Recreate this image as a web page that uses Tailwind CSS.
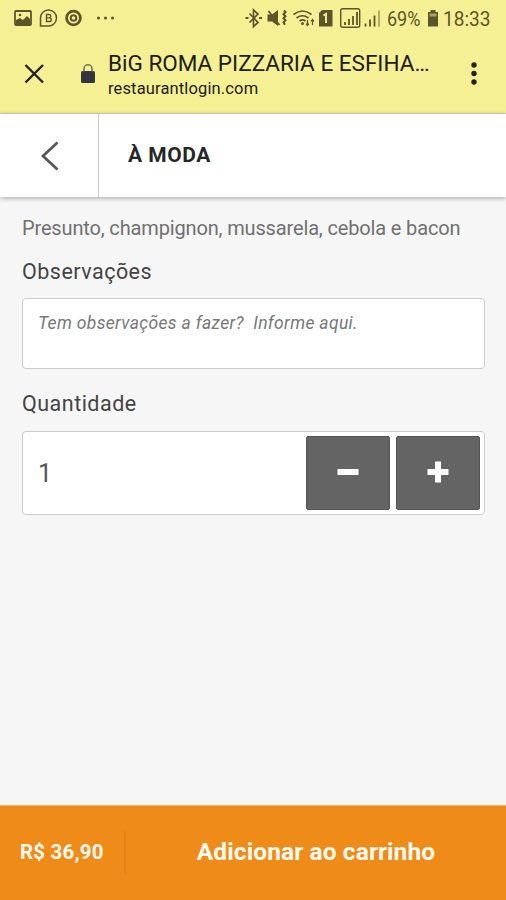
<!DOCTYPE html>
<html lang="pt-BR">
<head>
<meta charset="utf-8">
<meta name="viewport" content="width=device-width, initial-scale=1">
<title>BiG ROMA PIZZARIA E ESFIHARIA</title>
<script src="https://cdn.jsdelivr.net/npm/@tailwindcss/browser@4"></script>
</head>
<body class="flex h-[900px] w-[506px] flex-col overflow-hidden bg-[#f6f6f6] font-['Roboto',sans-serif] whitespace-nowrap">
  <div class="flex h-9 shrink-0 items-center bg-[#f6f094] pl-[14px] text-[#5c552c]">
    <svg class="h-9 w-[104px] shrink-0" viewBox="14 0 104 36" fill="none" stroke="currentColor">
      <rect x="15" y="11" width="16" height="14" rx="1" stroke-width="1.800"/>
      <path d="M16 24v-4l4-2 3 2 4-4 3 3v5z" fill="currentColor" stroke="none"/>
      <circle cx="20" cy="15" r="1.300" fill="currentColor" stroke="none"/>
      <path d="M40.500 26v-8a8 8 0 1 1 8 8z" stroke-width="1.500"/>
      <path d="M46.500 14.500h2.600a1.600 1.600 0 0 1 0 3.400h-2.600zm0 3.400h3a1.700 1.700 0 0 1 0 3.600h-3z" stroke-width="1.400"/>
      <circle cx="73.500" cy="18" r="6.900" stroke-width="2.800"/>
      <circle cx="73.500" cy="18" r="2.800" stroke-width="2"/>
      <g fill="currentColor" stroke="none"><circle cx="98.500" cy="18" r="1.500"/><circle cx="105.500" cy="18" r="1.500"/><circle cx="112.500" cy="18" r="1.500"/></g>
    </svg>
    <svg class="ml-[127px] h-9 w-[139px] shrink-0" viewBox="245 0 139 36" fill="none" stroke="currentColor">
      <path d="M249.500 13.500l8.500 9-4.500 4V10l4.500 4-8.500 8.500" stroke-width="1.700"/>
      <path d="M245.500 18h3M259 18h3" stroke-width="1.800"/>
      <path d="M267.500 14.500h4.500l6-4.500v16l-6-4.500h-4.500z" fill="currentColor" stroke="none"/>
      <path d="M268.500 11l11 14" stroke-width="1.800"/>
      <path d="M284 10.500l1.500 1.800-2 2 2 2-2 2 2 2-2 2 1.500 2.500" stroke-width="2"/>
      <path d="M293.500 14.500q9-7 18 0M296.500 18q6-4.500 12 0M299.500 21q3-2.300 6 0" stroke-width="1.600"/>
      <circle cx="302.500" cy="23.500" r="1.500" fill="currentColor" stroke="none"/>
      <path d="M307.500 20v5.500m-1.500-1.800l1.500 1.800 1.500-1.800M312.500 25v-5.500m-1.500 1.800l1.500-1.800 1.500 1.800" stroke-width="1.200"/>
      <path d="M322 10h10.500v16.500H319V13z" fill="currentColor" stroke="none"/>
      <path d="M323.500 15.500l2.500-1.500v9" stroke="#f6f094" stroke-width="1.900"/>
      <rect x="340.700" y="8.700" width="19" height="18.600" rx="2" stroke-width="1.400"/>
      <path d="M345 25v-3M349 25v-6M353 25v-9M357 25V12" stroke-width="1.800"/>
      <path d="M365.500 26.500v-3M370 26.500v-7M374.500 26.500v-11" stroke-width="1.800"/>
      <path d="M379 26.500v-16" stroke-width="1.800" opacity=".5"/>
    </svg>
    <span class="ml-[3px] w-[34px] pt-[2px]"><span class="inline-block origin-left scale-x-90 text-[20px]">69%</span></span>
    <svg class="ml-[6px] h-9 w-[12px] shrink-0" viewBox="427 0 12 36" fill="currentColor">
      <path d="M428 12h2.500v-2h5v2h2.500v14.500h-10z"/><path d="M429.500 13.500h7v3h-7z" fill="#a9a25a"/>
    </svg>
    <span class="ml-[4px] pt-[2px]"><span class="inline-block origin-left scale-x-93 text-[20.500px]">18:33</span></span>
  </div>

  <header class="flex h-[78px] shrink-0 border-b border-[#dcd6bd] bg-[#f6f094] text-[#1d1b18]">
    <svg class="ml-[24px] mt-[27px] size-[21px] shrink-0" viewBox="0 0 21 21" fill="none" stroke="#22212a" stroke-width="2.400"><path d="M1.500 2l17.500 17.500M19 2L1.500 19.500"/></svg>
    <svg class="ml-[35px] mt-[28px] h-[20px] w-[16px] shrink-0" viewBox="80 64 16 20"><rect x="81" y="71" width="14" height="12" rx="1.500" fill="#36353f"/><path d="M84 71.500v-2.700a4 4 0 0 1 8 0v2.700" fill="none" stroke="#77734e" stroke-width="1.600"/></svg>
    <div class="ml-[12px] w-[340px] pt-[14px]">
      <div class="text-[22.500px] leading-[26px]">BiG ROMA PIZZARIA E ESFIHA…</div>
      <div class="mt-[3px] text-[16.500px] leading-[20px] tracking-[0.140px]">restaurantlogin.com</div>
    </div>
    <svg class="ml-[22px] mt-[25px] h-[26px] w-[8px] shrink-0" viewBox="0 0 8 26" fill="#22211f"><circle cx="4" cy="4" r="2.700"/><circle cx="4" cy="12.500" r="2.700"/><circle cx="4" cy="21" r="2.700"/></svg>
  </header>

  <nav class="flex h-[83px] shrink-0 items-center bg-white shadow-[0_1px_5px_rgba(0,0,0,0.35)]">
    <div class="flex h-full w-[99px] items-center justify-center border-r border-[#cacaca]">
      <svg class="h-[30px] w-[19px]" viewBox="0 0 19 30" fill="none" stroke="#555" stroke-width="2.700"><path d="M17.500 1.500L3 15l14.500 13.500"/></svg>
    </div>
    <h1 class="ml-[29px] text-[21px] font-bold tracking-[0.500px] text-[#262626]">À MODA</h1>
  </nav>

  <main class="flex flex-1 flex-col px-[22px] pt-[18px]">
    <p class="text-[20px] leading-[26px] tracking-[-0.150px] text-[#707070]">Presunto, champignon, mussarela, cebola e bacon</p>
    <label class="mt-[18px] text-[21.500px] leading-[26px] tracking-[0.480px] text-[#444]">Observações</label>
    <div class="mt-[13px] h-[71px] w-[463px] rounded-[4px] border-[1.500px] border-[#ccc] bg-white px-[15px] pt-[12px] text-[17.500px] leading-[24px] tracking-[0.330px] whitespace-pre text-[#777] italic">Tem observações a fazer?  Informe aqui.</div>
    <label class="mt-[22px] text-[21.500px] leading-[26px] tracking-[0.480px] text-[#444]">Quantidade</label>
    <div class="mt-[14px] flex h-[84px] w-[463px] items-center gap-[6px] rounded-[4px] border border-[#ccc] bg-white pr-[4px] pl-[15px]">
      <span class="flex-1 pt-px text-[25px] text-[#555]">1</span>
      <button class="flex h-[74px] w-[84px] items-center justify-center rounded-[2px] border border-[#555] bg-[#646464] pb-[3px]"><svg class="size-[22px]" viewBox="0 0 22 22"><path d="M.5 8h21v6H.5z" fill="#fff"/></svg></button>
      <button class="flex h-[74px] w-[84px] items-center justify-center rounded-[2px] border border-[#555] bg-[#646464] pb-[3px]"><svg class="size-[22px]" viewBox="0 0 22 22"><path d="M8 .5h6V8h7.500v6H14v7.500H8V14H.5V8H8z" fill="#fff"/></svg></button>
    </div>
  </main>

  <footer class="flex h-[95px] shrink-0 items-center border-t border-[#f4b568] bg-[#ef8b18] pb-px text-[#fffaf0]">
    <div class="w-[124px] pl-[20px] text-[20.500px] font-bold tracking-[0.200px]">R$ 36,90</div>
    <div class="h-[44px] w-[2px] bg-[#e58316]"></div>
    <div class="flex-1 text-center text-[24.500px] font-bold tracking-[0.100px]">Adicionar ao carrinho</div>
  </footer>
</body>
</html>
